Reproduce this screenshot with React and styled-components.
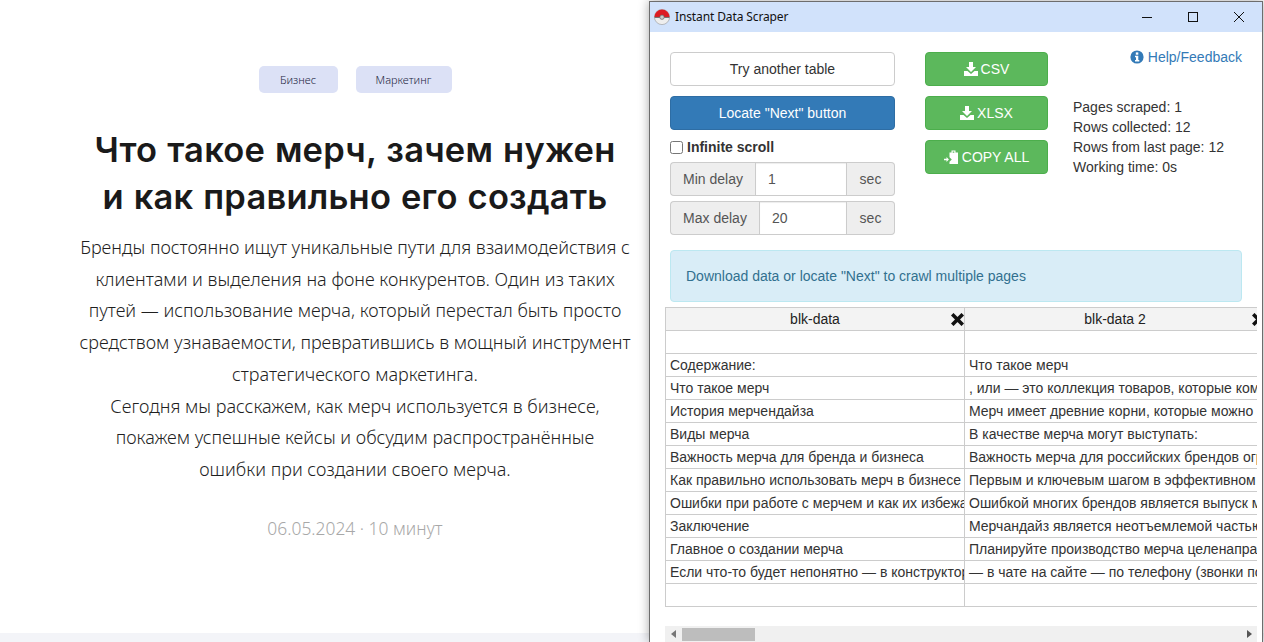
import React from "react";
import styled, { createGlobalStyle } from "styled-components";

const Global = createGlobalStyle`
  html, body { margin: 0; padding: 0; background: #fff; }
  * { box-sizing: border-box; }
`;

const Page = styled.div`
  position: relative;
  width: 1264px;
  height: 642px;
  overflow: hidden;
  background: #fff;
`;

const Article = styled.main`
  width: 710px;
  height: 633px;
  padding-top: 66px;
  display: flex;
  flex-direction: column;
  align-items: center;
  font-family: "Noto Sans", Roboto, sans-serif;
`;

const Footer = styled.div`
  height: 9px;
  background: #f3f4f8;
`;

const Tags = styled.div`
  display: flex;
  gap: 18px;
`;

const Tag = styled.span`
  height: 27px;
  width: ${(p) => p.$w}px;
  border-radius: 5px;
  background: #dce1f6;
  color: #23263f;
  font-size: 11px;
  font-weight: 300;
  display: flex;
  align-items: center;
  justify-content: center;
`;

const Title = styled.h1`
  margin: 33px 0 0;
  font-family: Inter, "Noto Sans", sans-serif;
  font-size: 34.5px;
  line-height: 47px;
  font-weight: 600;
  letter-spacing: 0.2px;
  word-spacing: 1px;
  color: #1a1a1a;
  text-align: center;
`;

const Lead = styled.p`
  margin: 12px 0 0;
  font-size: 18px;
  line-height: 31.7px;
  font-weight: 300;
  color: #1f1f1f;
  text-align: center;
`;

const Line = styled.span`
  display: block;
  white-space: nowrap;
`;

const Meta = styled.div`
  margin-top: 26px;
  font-size: 17.4px;
  line-height: 32px;
  font-weight: 300;
  color: #a8a8a8;
`;

const Win = styled.section`
  position: absolute;
  left: 649px;
  top: 1px;
  width: 614px;
  height: 641px;
  background: #fff;
  border: 1px solid #6d6d6d;
  border-bottom: none;
  box-shadow: 0 0 10px rgba(0, 0, 0, 0.35);
  font-family: "Liberation Sans", Arial, sans-serif;
  font-size: 14px;
  line-height: 20px;
  color: #333;
  display: flex;
  flex-direction: column;
`;

const TitleBar = styled.header`
  height: 30px;
  flex: none;
  background: #d1e2fb;
  display: flex;
  align-items: center;
  padding-left: 4px;
`;

const TitleText = styled.span`
  margin-left: 5px;
  font-family: "Noto Sans", sans-serif;
  font-size: 12px;
  letter-spacing: -0.12px;
  color: #111;
  flex: 1;
`;

const WinControls = styled.div`
  display: flex;
`;

const WinButton = styled.span`
  width: 46px;
  height: 30px;
  display: flex;
  align-items: center;
  justify-content: center;
`;

const Controls = styled.div`
  display: flex;
  padding: 20px 20px 0;
  height: 207px;
  flex: none;
`;

const LeftCol = styled.div`
  width: 225px;
  flex: none;
`;

const Btn = styled.button`
  display: flex;
  align-items: center;
  justify-content: center;
  width: 100%;
  height: 34px;
  padding: 0;
  border-radius: 4px;
  border: 1px solid ${(p) => (p.$kind === "primary" ? "#2e6da4" : p.$kind === "success" ? "#4cae4c" : "#ccc")};
  background: ${(p) => (p.$kind === "primary" ? "#337ab7" : p.$kind === "success" ? "#5cb85c" : "#fff")};
  color: ${(p) => (p.$kind ? "#fff" : "#333")};
  font-family: inherit;
  font-size: 14px;
  line-height: 20px;
  gap: 3px;
`;

const Stack = styled.div`
  display: flex;
  flex-direction: column;
  gap: 10px;
`;

const CheckRow = styled.label`
  display: flex;
  align-items: center;
  height: 20px;
  margin-top: 7px;
  font-weight: 700;
`;

const Check = styled.input`
  width: 13px;
  height: 13px;
  margin: 0 4px 0 0;
`;

const InputGroup = styled.div`
  display: flex;
  height: 34px;
  margin-top: ${(p) => p.$mt}px;
`;

const Addon = styled.span`
  flex: none;
  width: ${(p) => p.$w}px;
  display: flex;
  align-items: center;
  justify-content: center;
  background: #eee;
  border: 1px solid #ccc;
  color: #555;
  border-radius: ${(p) => (p.$end ? "0 4px 4px 0" : "4px 0 0 4px")};
  ${(p) => (p.$end ? "border-left: none;" : "border-right: none;")}
`;

const Field = styled.input`
  flex: 1;
  min-width: 0;
  height: 34px;
  padding: 0 12px;
  border: 1px solid #ccc;
  box-shadow: inset 0 1px 1px rgba(0, 0, 0, 0.075);
  font-family: inherit;
  font-size: 14px;
  color: #555;
  outline: none;
`;

const MidCol = styled.div`
  width: 123px;
  margin-left: 30px;
  flex: none;
`;

const RightCol = styled.div`
  margin-left: 25px;
  flex: 1;
  display: flex;
  flex-direction: column;
`;

const Help = styled.a`
  align-self: flex-end;
  display: flex;
  align-items: center;
  gap: 4px;
  margin-top: -5px;
  color: #337ab7;
  text-decoration: none;
`;

const Stats = styled.div`
  margin-top: 30px;
  white-space: nowrap;
`;

const Alert = styled.div`
  flex: none;
  height: 52px;
  margin: 11px 20px 0;
  padding: 0 15px;
  display: flex;
  align-items: center;
  background: #d9edf7;
  border: 1px solid #bce8f1;
  border-radius: 4px;
  color: #31708f;
`;

const TableWrap = styled.div`
  flex: none;
  margin: 5px 5px 0 15px;
  height: 300px;
  overflow: hidden;
`;

const Table = styled.table`
  border-collapse: collapse;
  table-layout: fixed;
  width: 600px;
`;

const Th = styled.th`
  position: relative;
  width: ${(p) => p.$w}px;
  height: 23px;
  padding: 0 4px 1px;
  border: 1px solid #ccc;
  background: #f3f3f3;
  font-weight: 400;
  color: #222;
  text-align: center;
`;

const Td = styled.td`
  height: 23px;
  padding: 0 4px 1px;
  border: 1px solid #ccc;
  white-space: nowrap;
  overflow: hidden;
  color: #333;
`;

const CloseMark = styled.svg`
  position: absolute;
  right: 0;
  top: 5px;
`;

const Scrollbar = styled.div`
  flex: none;
  margin: 19px 5px 0 15px;
  height: 16px;
  background: #f0f0f0;
  display: flex;
  align-items: center;
`;

const ScrollArrow = styled.span`
  width: 17px;
  flex: none;
  display: flex;
  justify-content: center;
`;

const Thumb = styled.span`
  width: 73px;
  height: 13px;
  background: #bdbdbd;
`;

const ScrollFill = styled.span`
  flex: 1;
`;

const Pokeball = () => (
  <svg width="16" height="16" viewBox="0 0 16 16">
    <circle cx="8" cy="8" r="7.6" fill="#eee" stroke="#999" strokeWidth="0.6" />
    <path d="M0.4 8a7.6 7.6 0 0 1 15.2 0 Z" fill="#dd1c24" />
    <path d="M0.6 8.4h14.8" stroke="#666" strokeWidth="1" />
    <circle cx="8" cy="8.2" r="2.2" fill="#ccc" stroke="#666" strokeWidth="0.7" />
  </svg>
);

const SaveIcon = () => (
  <svg width="14" height="14" viewBox="0 0 14 14" fill="#fff">
    <path d="M5 0h4v5h3L7 10 2 5h3z" />
    <path d="M0 9h3.5L7 12l3.5-3H14v5H0z" />
  </svg>
);

const PasteIcon = () => (
  <svg width="15" height="14" viewBox="0 0 15 14" fill="#fff">
    <path
      fillRule="evenodd"
      d="M7.5 0.5h4v2h2.5V14H5.5v-2.2l2.3-2.3-2.3-2.3V2.5h2zM8.7 1.5v1.2h1.6V1.5z"
    />
    <path d="M0 8.7h2.5V7l2.4 2.5L2.5 12v-1.7H0z" />
  </svg>
);

const InfoIcon = () => (
  <svg width="14" height="14" viewBox="0 0 14 14">
    <circle cx="7" cy="7" r="6.6" fill="#337ab7" />
    <rect x="5.8" y="2.4" width="2.5" height="2.3" fill="#fff" />
    <path d="M5 5.8h3.3v4.2h1v1.4H5V10h1V7.2H5z" fill="#fff" />
  </svg>
);

const XIcon = () => (
  <CloseMark width="13" height="13" viewBox="0 0 13 13">
    <path d="M2.5 2.5l8 8M10.5 2.5l-8 8" stroke="#111" strokeWidth="3.6" strokeLinecap="square" />
  </CloseMark>
);

const articleTitle = ["Что такое мерч, зачем нужен", "и как правильно его создать"];
const leadLines = [
  "Бренды постоянно ищут уникальные пути для взаимодействия с",
  "клиентами и выделения на фоне конкурентов. Один из таких",
  "путей — использование мерча, который перестал быть просто",
  "средством узнаваемости, превратившись в мощный инструмент",
  "стратегического маркетинга.",
  "Сегодня мы расскажем, как мерч используется в бизнесе,",
  "покажем успешные кейсы и обсудим распространённые",
  "ошибки при создании своего мерча.",
];

const rows = [
  ["", ""],
  ["Содержание:", "Что такое мерч"],
  ["Что такое мерч", ", или — это коллекция товаров, которые компании выпускают"],
  ["История мерчендайза", "Мерч имеет древние корни, которые можно проследить"],
  ["Виды мерча", "В качестве мерча могут выступать:"],
  ["Важность мерча для бренда и бизнеса", "Важность мерча для российских брендов огромна"],
  ["Как правильно использовать мерч в бизнесе", "Первым и ключевым шагом в эффективном использовании"],
  ["Ошибки при работе с мерчем и как их избежать", "Ошибкой многих брендов является выпуск мерча"],
  ["Заключение", "Мерчандайз является неотъемлемой частью"],
  ["Главное о создании мерча", "Планируйте производство мерча целенаправленно"],
  ["Если что-то будет непонятно — в конструкторе", "— в чате на сайте — по телефону (звонки по России)"],
  ["", ""],
];

export default function App() {
  return (
    <Page>
      <Global />
      <Article>
        <Tags>
          <Tag $w={79}>Бизнес</Tag>
          <Tag $w={96}>Маркетинг</Tag>
        </Tags>
        <Title>
          {articleTitle.map((t) => (
            <Line key={t}>{t}</Line>
          ))}
        </Title>
        <Lead>
          {leadLines.map((t) => (
            <Line key={t}>{t}</Line>
          ))}
        </Lead>
        <Meta>06.05.2024 · 10 минут</Meta>
      </Article>
      <Footer />
      <Win>
        <TitleBar>
          <Pokeball />
          <TitleText>Instant Data Scraper</TitleText>
          <WinControls>
            <WinButton>
              <svg width="10" height="10" viewBox="0 0 10 10">
                <path d="M0 5.5h10" stroke="#111" />
              </svg>
            </WinButton>
            <WinButton>
              <svg width="10" height="10" viewBox="0 0 10 10">
                <rect x="0.5" y="0.5" width="9" height="9" fill="none" stroke="#111" />
              </svg>
            </WinButton>
            <WinButton>
              <svg width="10" height="10" viewBox="0 0 10 10">
                <path d="M0 0l10 10M10 0L0 10" stroke="#111" />
              </svg>
            </WinButton>
          </WinControls>
        </TitleBar>
        <Controls>
          <LeftCol>
            <Stack>
              <Btn>Try another table</Btn>
              <Btn $kind="primary">Locate "Next" button</Btn>
            </Stack>
            <CheckRow>
              <Check type="checkbox" />
              Infinite scroll
            </CheckRow>
            <InputGroup $mt={5}>
              <Addon $w={85}>Min delay</Addon>
              <Field defaultValue="1" />
              <Addon $w={48} $end>sec</Addon>
            </InputGroup>
            <InputGroup $mt={5}>
              <Addon $w={89}>Max delay</Addon>
              <Field defaultValue="20" />
              <Addon $w={48} $end>sec</Addon>
            </InputGroup>
          </LeftCol>
          <MidCol>
            <Stack>
              <Btn $kind="success"><SaveIcon />CSV</Btn>
              <Btn $kind="success"><SaveIcon />XLSX</Btn>
              <Btn $kind="success"><PasteIcon />COPY ALL</Btn>
            </Stack>
          </MidCol>
          <RightCol>
            <Help href="#">
              <InfoIcon />
              Help/Feedback
            </Help>
            <Stats>
              <div>Pages scraped: 1</div>
              <div>Rows collected: 12</div>
              <div>Rows from last page: 12</div>
              <div>Working time: 0s</div>
            </Stats>
          </RightCol>
        </Controls>
        <Alert>Download data or locate "Next" to crawl multiple pages</Alert>
        <TableWrap>
          <Table>
            <thead>
              <tr>
                <Th $w={299}>blk-data<XIcon /></Th>
                <Th $w={301}>blk-data 2<XIcon /></Th>
              </tr>
            </thead>
            <tbody>
              {rows.map((r, i) => (
                <tr key={i}>
                  <Td>{r[0]}</Td>
                  <Td>{r[1]}</Td>
                </tr>
              ))}
            </tbody>
          </Table>
        </TableWrap>
        <Scrollbar>
          <ScrollArrow>
            <svg width="6" height="8" viewBox="0 0 6 8"><path d="M5 0v8L0 4z" fill="#777" /></svg>
          </ScrollArrow>
          <Thumb />
          <ScrollFill />
          <ScrollArrow>
            <svg width="6" height="8" viewBox="0 0 6 8"><path d="M1 0v8l5-4z" fill="#555" /></svg>
          </ScrollArrow>
        </Scrollbar>
      </Win>
    </Page>
  );
}
